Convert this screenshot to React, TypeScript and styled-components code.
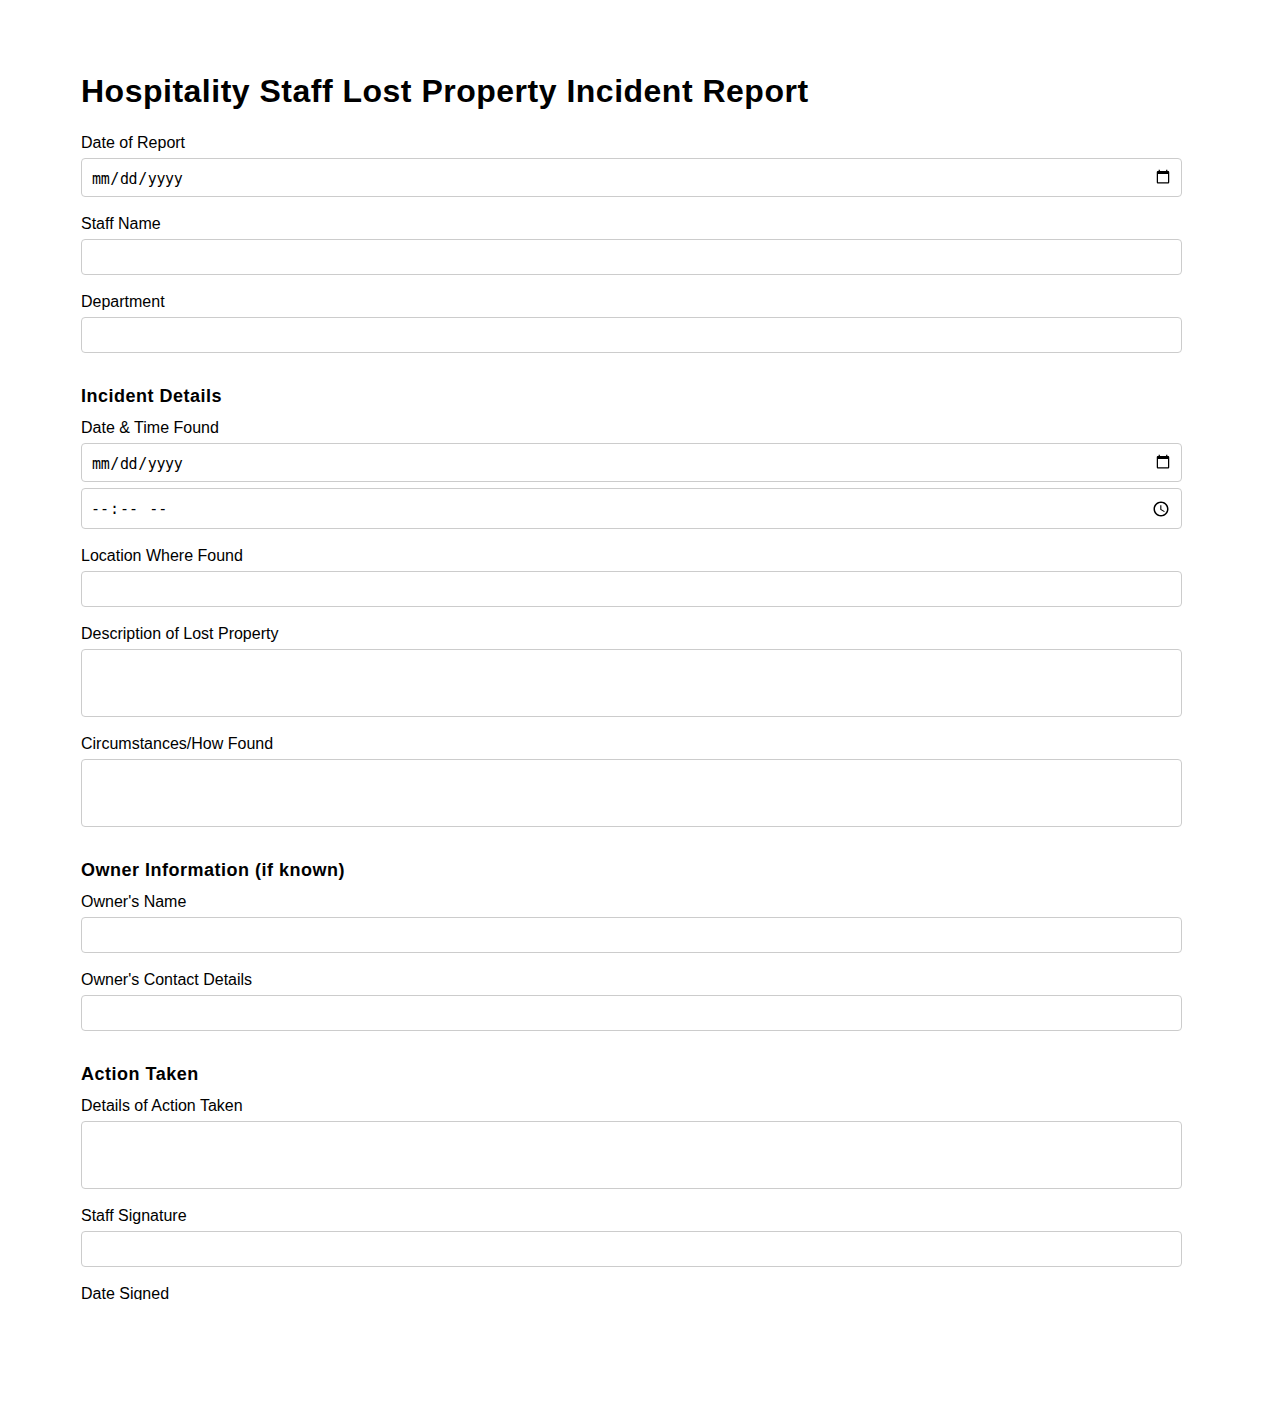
import React from 'react';
import styled, { createGlobalStyle, css } from 'styled-components';

const GlobalStyle = createGlobalStyle`
  html, body {
    margin: 0;
    padding: 0;
    background: #fff;
  }
`;

type FieldProps = {
  label: string;
  type?: 'text' | 'date' | 'textarea';
};

const Field: React.FC<FieldProps> = ({ label, type = 'text' }) => (
  <FieldRow>
    <Label>{label}</Label>
    {type === 'textarea' && <TextArea />}
    {type === 'date' && <DateInput type="date" />}
    {type === 'text' && <Input type="text" />}
  </FieldRow>
);

const App: React.FC = () => {
  return (
    <Page>
      <GlobalStyle />
      <Sheet>
        <Title>Hospitality Staff Lost Property Incident Report</Title>
        <Field label="Date of Report" type="date" />
        <Field label="Staff Name" />
        <Field label="Department" />

        <SectionTitle>Incident Details</SectionTitle>
        <FieldRow>
          <Label>Date &amp; Time Found</Label>
          <DateInput type="date" />
          <TimeInput type="time" />
        </FieldRow>
        <Field label="Location Where Found" />
        <Field label="Description of Lost Property" type="textarea" />
        <Field label="Circumstances/How Found" type="textarea" />

        <SectionTitle>Owner Information (if known)</SectionTitle>
        <Field label="Owner's Name" />
        <Field label="Owner's Contact Details" />

        <SectionTitle>Action Taken</SectionTitle>
        <Field label="Details of Action Taken" type="textarea" />
        <Field label="Staff Signature" />
        <Field label="Date Signed" type="date" />
      </Sheet>
    </Page>
  );
};

export default App;

const Page = styled.div`
  height: 1418px;
  box-sizing: border-box;
  padding: 60px 81px 0;
  font-family: "Liberation Sans", Arial, sans-serif;
  color: #000;
`;

const Sheet = styled.form`
  height: 1240px;
  overflow: hidden;
`;

const Title = styled.h1`
  margin: 13px 0 24px;
  font-size: 32px;
  line-height: 37px;
  font-weight: 700;
  letter-spacing: 0.5px;
`;

const SectionTitle = styled.h2`
  margin: 33px 0 12px;
  font-size: 18px;
  line-height: 21px;
  font-weight: 700;
  letter-spacing: 0.5px;
`;

const FieldRow = styled.div`
  margin-bottom: 18px;
`;

const Label = styled.label`
  display: block;
  margin-bottom: 6px;
  font-size: 16px;
  line-height: 18px;
`;

const controlBox = css`
  display: block;
  box-sizing: border-box;
  width: 100%;
  border: 1px solid #ccc;
  border-radius: 4px;
  background: #fff;
`;

const Input = styled.input`
  ${controlBox}
  padding: 8px 10px;
  font-family: "Liberation Sans", Arial, sans-serif;
  font-size: 16px;
`;

const DateInput = styled.input`
  ${controlBox}
  height: 39px;
  padding: 9px 9px 7px;
  font-family: "DejaVu Sans Mono", monospace;
  font-size: 15px;
  letter-spacing: -0.4px;

  &::-webkit-calendar-picker-indicator {
    width: 16px;
    height: 16px;
    margin: 0 1px 3px 0;
    padding: 0;
  }
`;

const TimeInput = styled(DateInput)`
  height: 41px;
  margin-top: 6px;
  padding: 8px 9px 8px 8px;
  letter-spacing: -0.6px;

  &::-webkit-calendar-picker-indicator {
    width: 18px;
    height: 18px;
    margin: 0 2px 0 0;
  }
`;

const TextArea = styled.textarea`
  ${controlBox}
  height: 68px;
  padding: 8px 10px;
  font-family: "Liberation Sans", Arial, sans-serif;
  font-size: 16px;
  resize: none;
`;
